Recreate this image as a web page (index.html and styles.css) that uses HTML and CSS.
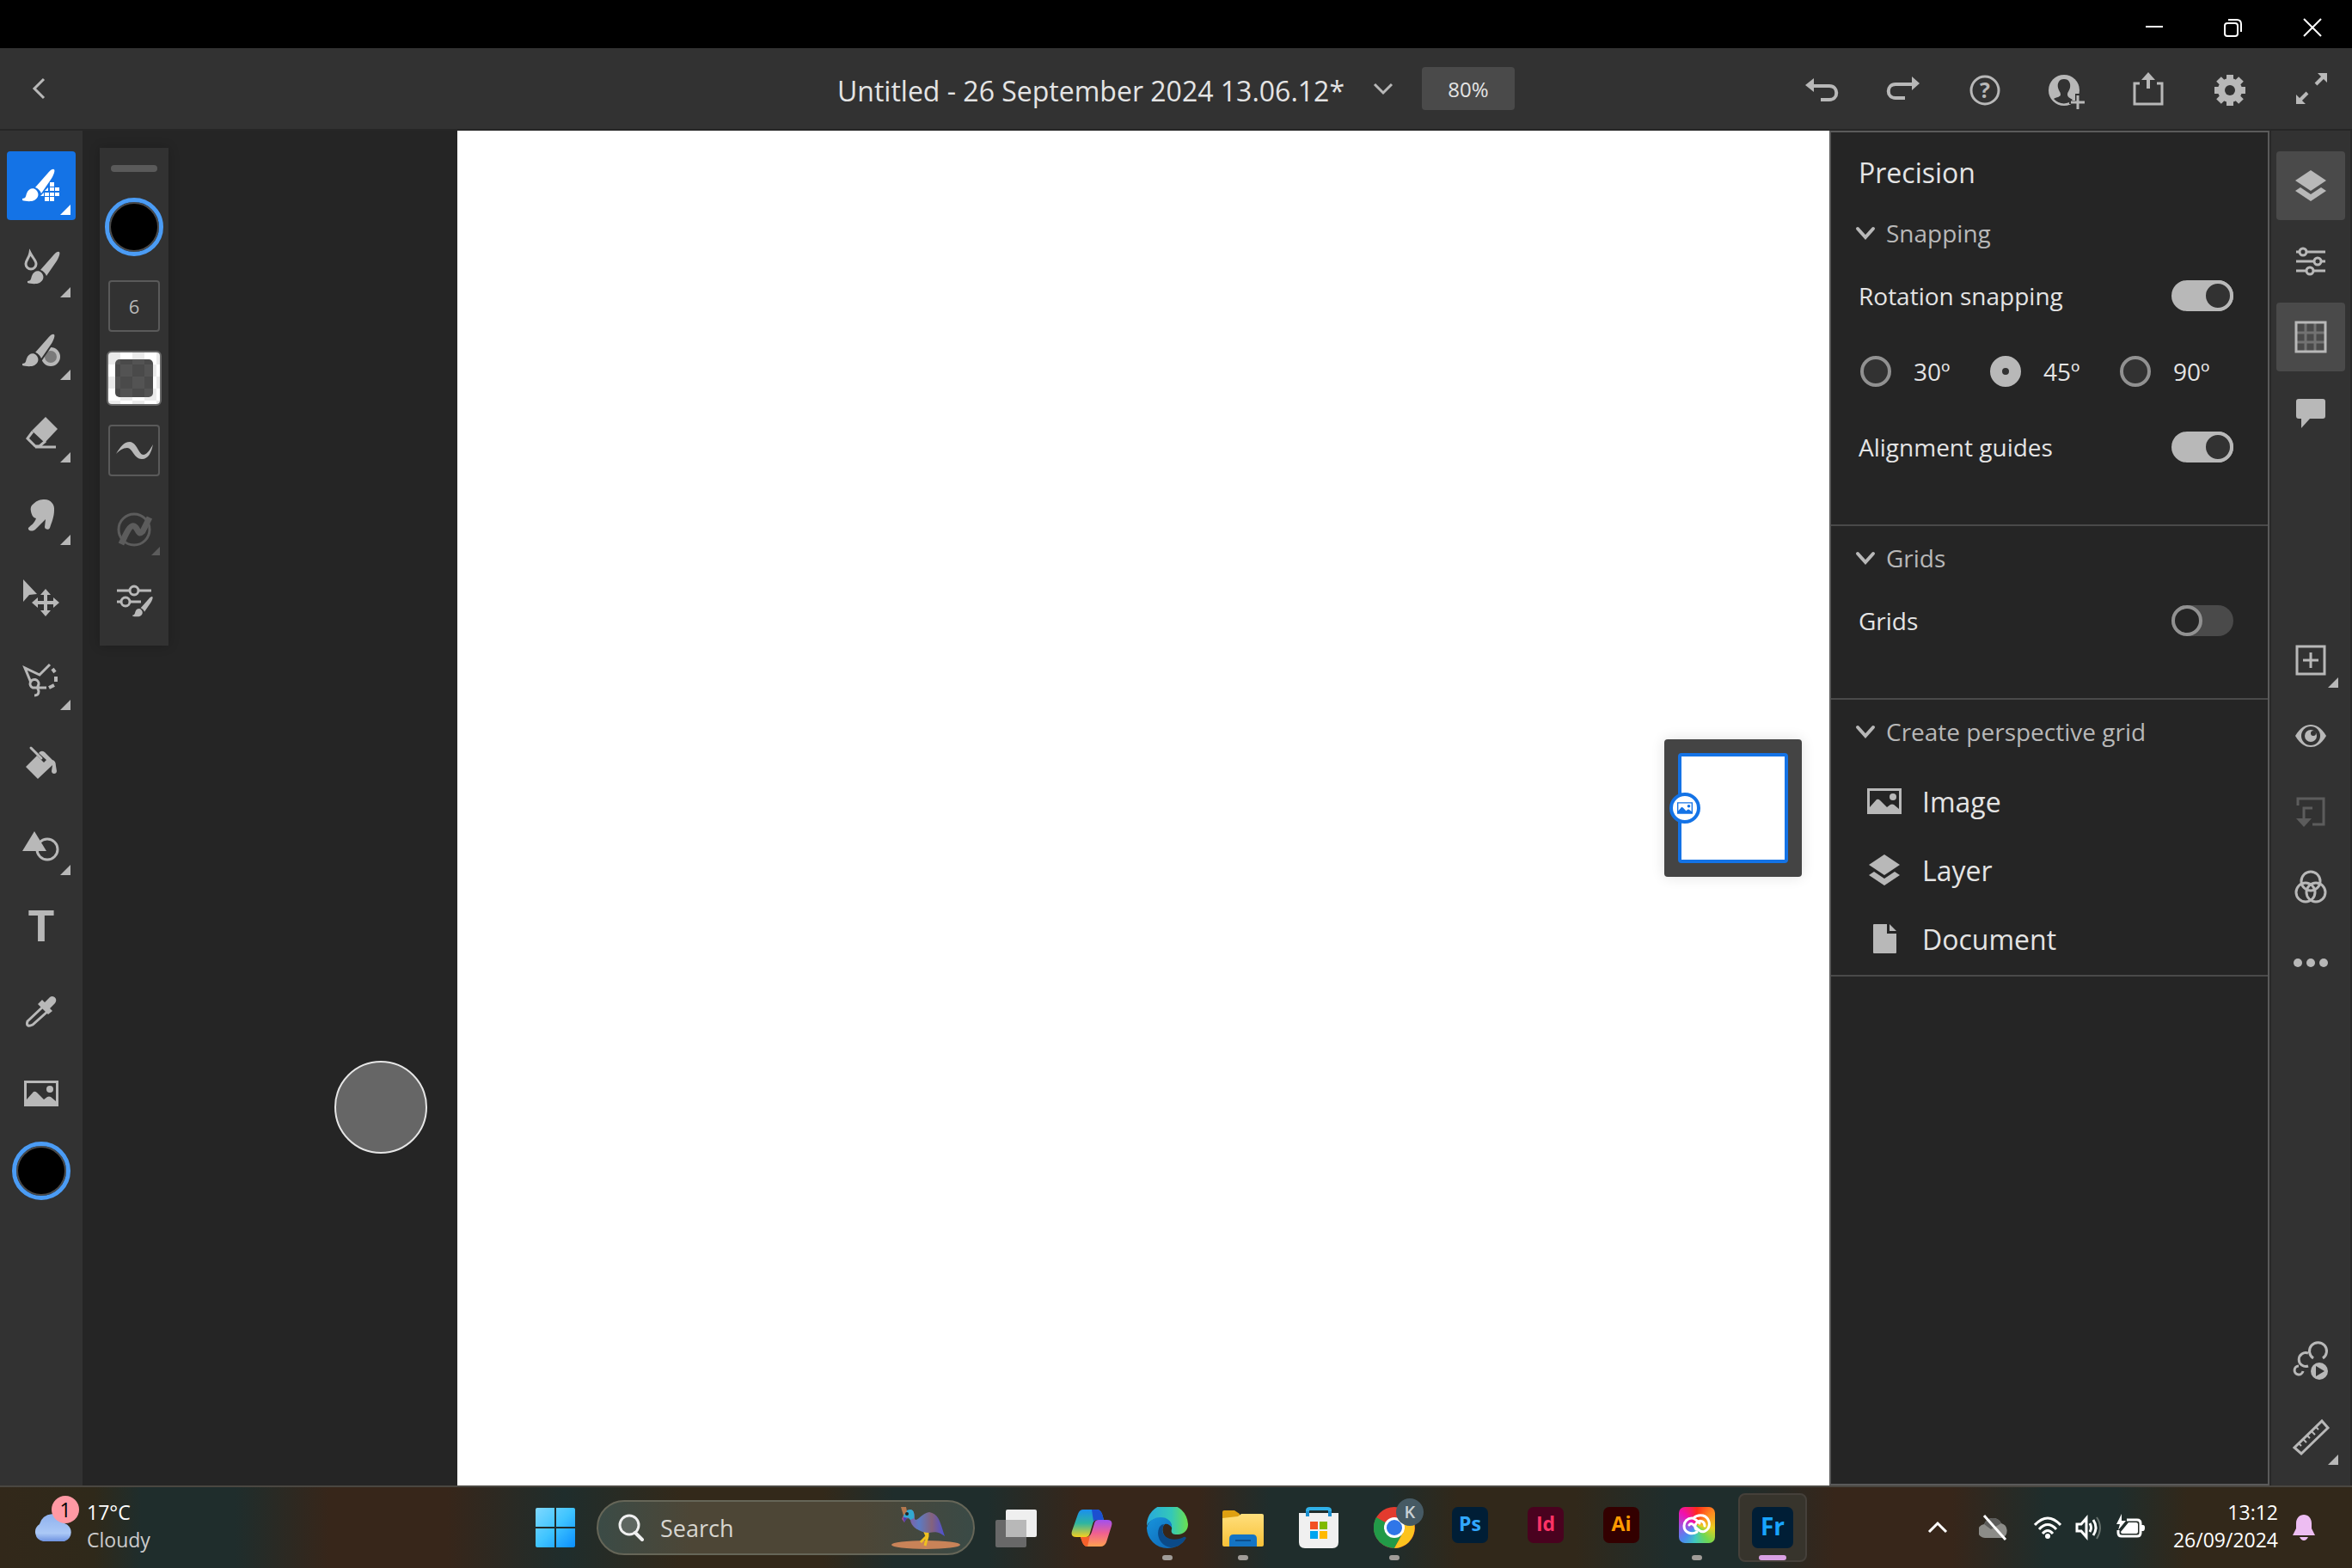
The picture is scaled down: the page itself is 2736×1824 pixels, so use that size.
FILE: index.html
```html
<!DOCTYPE html>
<html lang="en">
  <head>
    <meta charset="UTF-8" />
    <meta name="viewport" content="width=device-width, initial-scale=1.0" />
    <title>Untitled - 26 September 2024 13.06.12*</title>
    <link rel="stylesheet" href="styles.css">
  </head>
  <body>
    <!-- shared icon shapes -->
    <svg class="defs" width="0" height="0" aria-hidden="true">
      <symbol id="brush" viewBox="0 0 80 80">
        <path d="M33 42 L48 25 C52 20 57 19 55 25 C54 28 53 30 51 33 L40 49 C39 46 36 43 33 42z" />
        <path d="M18 55 C22 55 22 52 23 49 C25 43 31 42 34 45 C38 49 37 54 32 57 C28 59 21 58 18 57z" />
      </symbol>
      <symbol id="picture" viewBox="0 0 40 30">
        <path fill-rule="evenodd" d="M0 0H40V30H0z M3 3V22L11 13Q13 12 15 14L23 22L27 19Q29 18 31 19L37 24V3z" />
        <circle cx="30" cy="10" r="4" />
      </symbol>
      <symbol id="layers" viewBox="0 0 36 36">
        <path d="M18 0L36 12L18 24L0 12z" />
        <path d="M6 20L18 28L30 20L36 24L18 36L0 24z" />
      </symbol>
      <symbol id="chevron" viewBox="0 0 24 24">
        <path d="M3 7L12 17L21 7" fill="none" stroke="currentColor" stroke-width="4" stroke-linecap="round" />
      </symbol>
    </svg>

    <div class="titlebar">
      <button aria-label="Minimize"><svg width="24" height="24"><path d="M2 11H22" /></svg></button>
      <button aria-label="Restore"><svg width="24" height="24"><rect x="2" y="7" width="15" height="15" rx="3" /><path d="M6 3H16Q21 3 21 8V17" /></svg></button>
      <button aria-label="Close"><svg width="24" height="24"><path d="M2 2L22 22M22 2L2 22" /></svg></button>
    </div>

    <header class="header">
      <div class="header-left">
        <button aria-label="Back"><svg width="24" height="28"><path class="line" d="M17 3L6 14L17 25" /></svg></button>
      </div>
      <div class="header-title">
        <h1>Untitled - 26 September 2024 13.06.12*</h1>
        <button class="title-menu" aria-label="Document menu"><svg width="24" height="24"><path class="line" d="M2 7L12 17L22 7" /></svg></button>
        <button class="zoom">80%</button>
      </div>
      <div class="header-actions">
        <button aria-label="Undo"><svg width="48" height="48"><path d="M5 20L15 12V28z" /><path class="line thick" d="M13 21H33C44 21 44 37 33 37H23" /></svg></button>
        <button aria-label="Redo"><svg width="48" height="48"><path d="M43 18L34 10V26z" /><path class="line thick" d="M35 19H15C4 19 4 35 15 35H26" /></svg></button>
        <button aria-label="Help"><svg width="48" height="48"><circle class="line" cx="24" cy="26" r="16" /><text x="24" y="35" text-anchor="middle">?</text></svg></button>
        <button aria-label="Invite"><svg width="48" height="48"><circle cx="21" cy="26" r="18" /><path class="hole" d="M21 13C15 13 13 18 14 23C15 27 17 28 17 31C17 34 12 34 9 36C15 43 26 43 31 37C28 35 25 34 25 31C25 28 27 27 28 23C29 18 27 13 21 13z" /><path class="hole" d="M27 38H34V30H48V48H31V42H27z" /><path class="line" d="M37 32V48M29 40H45" /></svg></button>
        <button aria-label="Share"><svg width="48" height="48"><path d="M24 5L32 14H16z" /><path class="line thick" d="M24 12V24" /><path class="line" d="M14 18H8V42H40V18H34" /></svg></button>
        <button aria-label="Settings"><svg width="48" height="48"><path class="line cog" d="M24 8V44M6 26H42M11 13L37 39M37 13L11 39" /><circle cx="24" cy="26" r="14" /><circle class="hole" cx="24" cy="26" r="6" /></svg></button>
        <button aria-label="Full screen"><svg width="48" height="48"><path d="M31 6H42V17zM6 31V42H17z" /><path class="line thick" d="M37 11L29 19M11 37L19 29" /></svg></button>
      </div>
    </header>

    <main class="workspace">
      <nav class="toolbar" aria-label="Tools">
        <button class="active" aria-label="Pixel brush">
          <svg width="80" height="80">
            <use href="#brush" width="80" height="80" />
            <path d="M50 36h5v5h-5zM44 46l4-4v4zM50 42h5v4h-5zM56 42h5v4h-5zM39 52l4-4v4zM44 48h5v4h-5zM50 48h5v4h-5zM56 48h5v4h-5zM44 53h5v5h-5zM50 53h5v5h-5z" />
            <path d="M74 62V74H62z" />
          </svg>
        </button>
        <button aria-label="Live brush">
          <svg width="80" height="80">
            <use href="#brush" x="6" width="80" height="80" />
            <path class="line" d="M27 22C30 28 34 31 34 35A6 6 0 0 1 22 35C22 31 26 28 27 22z" />
            <path d="M74 62V74H62z" />
          </svg>
        </button>
        <button aria-label="Vector brush">
          <svg width="80" height="80">
            <circle cx="51" cy="47" r="11" /><circle class="dim" cx="51" cy="47" r="7" />
            <g class="cutout"><use href="#brush" width="80" height="80" /></g>
            <path d="M74 62V74H62z" />
          </svg>
        </button>
        <button aria-label="Eraser">
          <svg width="80" height="80">
            <path d="M45 21L59 35L44 51L29 37z" />
            <path class="line" d="M30 38L24 46L33 55L38 55L45 49M33 56H57" />
            <path d="M74 62V74H62z" />
          </svg>
        </button>
        <button aria-label="Smudge">
          <svg width="80" height="80">
            <path d="M31 26C35 22 39 21 44 21C51 21 56 27 55 34C55 41 52 48 50 54C49 57 44 56 44 53L45 44L33 56C29 59 24 57 25 54C28 51 32 49 34 43C30 42 29 39 28 35C27 31 28 28 31 26z" />
            <path d="M74 62V74H62z" />
          </svg>
        </button>
        <button aria-label="Move">
          <svg width="80" height="80">
            <path d="M19 18L35 35L26 36L19 44z" />
            <path class="line thick" d="M45 33V57M33 45H57" />
            <path d="M45 29L51 36H39zM45 61L51 54H39zM29 45L36 39V51zM61 45L54 39V51z" />
          </svg>
        </button>
        <button aria-label="Lasso">
          <svg width="80" height="80">
            <path class="line" d="M28 42L21 25L38 33L50 21" />
            <path class="line" d="M46 48L30 48A5 5 0 1 1 37 44C34 50 37 50 37 52Q37 57 32 57" />
            <path class="line thick" d="M49 48L55 45M57 41V35M56 30L53 26" />
            <path d="M74 62V74H62z" />
          </svg>
        </button>
        <button aria-label="Fill">
          <svg width="80" height="80">
            <path d="M22 44L35 31L43 39L46 36L37 28Q40 24 44 27L53 36Q57 37 57 43L58 49C58 53 52 53 52 49L53 42L36 58z" />
            <path class="line" d="M28 22L40 34" stroke-linecap="round" />
          </svg>
        </button>
        <button aria-label="Shapes">
          <svg width="80" height="80">
            <circle class="line" cx="47" cy="44" r="12" />
            <path d="M32 23L46 46H18z" />
            <path d="M74 62V74H62z" />
          </svg>
        </button>
        <button class="type" aria-label="Type">T</button>
        <button aria-label="Eyedropper">
          <svg width="80" height="80">
            <path class="line" d="M42 35L24 52C22 58 26 58 30 56L48 40" />
            <path d="M36 32L41 27L44 30L50 24C54 21 60 26 56 31L50 37L53 40L48 44z" />
          </svg>
        </button>
        <button aria-label="Place image"><svg width="80" height="80"><use href="#picture" x="20" y="25" width="40" height="30" /></svg></button>
        <button class="swatch" aria-label="Color"></button>
      </nav>

      <section class="stage">
        <div class="artboard"></div>

        <div class="brush-panel">
          <span class="handle"></span>
          <button class="swatch" aria-label="Brush color"></button>
          <button class="boxed" aria-label="Brush size 6">6</button>
          <button class="opacity" aria-label="Opacity"><span></span></button>
          <button class="boxed" aria-label="Smoothing"><svg width="56" height="56"><path d="M7 32C12 24 16 18 23 18C32 19 33 33 39 33C44 32 47 26 50 21C48 30 45 38 37 38C28 38 26 25 20 25C15 25 11 28 7 32z" /></svg></button>
          <button class="disabled" aria-label="Pressure" disabled><svg width="60" height="60"><circle class="line" cx="30" cy="30" r="18" /><path class="line fat" d="M15 47C20 36 25 24 30 26S34 38 40 32L48 16" /><path d="M60 50V60H50z" /></svg></button>
          <button class="settings" aria-label="Brush settings">
            <svg width="60" height="60">
              <path class="line" d="M10 18H24M36 18H50M10 31H14M26 31H38" />
              <circle class="line" cx="30" cy="18" r="5" /><circle class="line" cx="20" cy="31" r="5" />
              <use href="#brush" x="17" y="12" width="50" height="50" />
            </svg>
          </button>
        </div>

        <div class="touch-shortcut"></div>

        <div class="layer-thumb">
          <div class="layer-preview"></div>
          <span class="layer-badge"><svg width="18" height="16"><use href="#picture" width="18" height="16" /></svg></span>
        </div>
      </section>

      <aside class="panel">
        <section>
          <h2>Precision</h2>
          <button class="section-head"><svg width="24" height="24"><use href="#chevron" /></svg>Snapping</button>
          <div class="row">
            <label for="rotation">Rotation snapping</label>
            <input class="switch" type="checkbox" role="switch" id="rotation" checked />
          </div>
          <div class="radios">
            <label><input type="radio" name="angle" />30º</label>
            <label><input type="radio" name="angle" checked />45º</label>
            <label><input type="radio" name="angle" />90º</label>
          </div>
          <div class="row">
            <label for="guides">Alignment guides</label>
            <input class="switch" type="checkbox" role="switch" id="guides" checked />
          </div>
        </section>
        <section class="padded">
          <button class="section-head"><svg width="24" height="24"><use href="#chevron" /></svg>Grids</button>
          <div class="row">
            <label for="grids">Grids</label>
            <input class="switch" type="checkbox" role="switch" id="grids" />
          </div>
        </section>
        <section class="padded perspective">
          <button class="section-head"><svg width="24" height="24"><use href="#chevron" /></svg>Create perspective grid</button>
          <button class="item"><svg width="40" height="36"><use href="#picture" y="3" width="40" height="30" /></svg>Image</button>
          <button class="item"><svg width="40" height="36"><use href="#layers" x="2" width="36" height="36" /></svg>Layer</button>
          <button class="item"><svg width="40" height="36"><path d="M7 2Q7 1 8 1H23V12H34V34Q34 35 33 35H8Q7 35 7 34z M26 1L34 9H26z" /></svg>Document</button>
        </section>
      </aside>

      <nav class="rail" aria-label="Panels">
        <button class="on" aria-label="Layers"><svg width="80" height="80"><use href="#layers" x="22" y="22" width="36" height="36" /></svg></button>
        <button aria-label="Layer properties">
          <svg width="80" height="80">
            <path class="line" d="M23 29H26M36 29H57M23 40H43M53 40H57M23 51H34M44 51H57" />
            <circle class="line" cx="31" cy="29" r="4" /><circle class="line" cx="48" cy="40" r="4" /><circle class="line" cx="39" cy="51" r="4" />
          </svg>
        </button>
        <button class="on" aria-label="Precision">
          <svg width="80" height="80">
            <path class="line faint" d="M34 24V56M45 24V56M24 35H56M24 46H56" />
            <rect class="line" x="23" y="23" width="34" height="34" />
          </svg>
        </button>
        <button aria-label="Comments"><svg width="80" height="80"><path d="M26 24H54Q57 24 57 27V44Q57 47 54 47H39L29 58V47H26Q23 47 23 44V27Q23 24 26 24z" /></svg></button>
        <button class="spaced" aria-label="Add layer"><svg width="80" height="80"><rect class="line" x="24" y="24" width="32" height="32" /><path class="line" d="M40 31V49M31 40H49" /><path d="M72 60V72H60z" /></svg></button>
        <button aria-label="Toggle visibility">
          <svg width="80" height="80">
            <path d="M22 40C28 30 34 27 40 27S52 30 58 40C52 50 46 53 40 53S28 50 22 40z" />
            <circle class="hole" cx="40" cy="40" r="11" /><circle cx="40" cy="40" r="7" /><circle class="hole" cx="43" cy="37" r="3" />
          </svg>
        </button>
        <button class="disabled" aria-label="Clip layer" disabled><svg width="80" height="80"><path class="line" d="M25 33V25H55V55H42M42 36H32V48" /><path d="M23 48H41L32 58z" /></svg></button>
        <button aria-label="Blend"><svg width="80" height="80"><circle class="line" cx="40" cy="33" r="11" /><circle class="line" cx="34" cy="46" r="11" /><circle class="line" cx="46" cy="46" r="11" /></svg></button>
        <button aria-label="More"><svg width="80" height="80"><circle cx="25" cy="40" r="5" /><circle cx="40" cy="40" r="5" /><circle cx="55" cy="40" r="5" /></svg></button>
        <button class="bottom" aria-label="Replay">
          <svg width="80" height="80">
            <path class="line" d="M43 36A10 10 0 1 1 54 36M37 30A8 8 0 1 0 37 45M26 45A5 5 0 1 0 31 51" />
            <circle cx="50" cy="51" r="10" /><path class="hole" d="M46 45L56 51L46 57z" />
          </svg>
        </button>
        <button aria-label="Ruler">
          <svg width="80" height="80">
            <path class="line" d="M53 21L60 29L29 59L21 52z" /><path class="line thin" d="M26 47L29 50M31 42L35 46M36 38L39 41M41 33L45 37M46 28L49 31" />
            <path d="M72 60V72H60z" />
          </svg>
        </button>
      </nav>
    </main>

    <footer class="taskbar">
      <button class="weather">
        <span class="cloud">
          <svg width="48" height="34">
            <defs><linearGradient id="cloudFill" x2="0" y2="1"><stop offset="0" stop-color="#8fb2ee" /><stop offset="0.7" stop-color="#abc8f6" /><stop offset="1" stop-color="#6f93e0" /></linearGradient></defs>
            <path d="M12 33A11 11 0 0 1 8 13A15 15 0 0 1 37 12A11 11 0 0 1 37 33z" fill="url(#cloudFill)" />
          </svg>
          <span class="count">1</span>
        </span>
        <span class="weather-text">17°C<small>Cloudy</small></span>
      </button>

      <div class="apps">
        <button aria-label="Start">
          <svg width="46" height="46">
            <defs><linearGradient id="winFill" gradientUnits="userSpaceOnUse" x1="0" y1="0" x2="46" y2="46"><stop offset="0" stop-color="#7fd9ff" /><stop offset="0.5" stop-color="#3fc4ff" /><stop offset="1" stop-color="#0a8fff" /></linearGradient></defs>
            <path fill="url(#winFill)" d="M0 2Q0 0 2 0H22V22H0zM24 0H44Q46 0 46 2V22H24zM0 24H22V46H2Q0 46 0 44zM24 24H46V44Q46 46 44 46H24z" />
          </svg>
        </button>
        <label class="search">
          <svg width="32" height="32"><circle cx="14" cy="13" r="11" fill="#5e6660" stroke="#f0f0f0" stroke-width="3" /><path d="M21 22L29 30" stroke="#f0f0f0" stroke-width="4" stroke-linecap="round" /></svg>
          <input type="text" placeholder="Search" aria-label="Search" />
          <svg width="80" height="52">
            <defs><linearGradient id="birdFill"><stop offset="0" stop-color="#a04a8c" /><stop offset="0.4" stop-color="#5b7bc4" /><stop offset="0.7" stop-color="#85627c" /><stop offset="1" stop-color="#4a50d8" /></linearGradient></defs>
            <ellipse cx="40" cy="46" rx="40" ry="5" fill="#c98358" />
            <path d="M38 29L41 36L34 43M42 28L42 36L39 47" fill="none" stroke="#f0c020" stroke-width="3" />
            <path d="M19 6C26 3 27 10 27 16C30 20 34 10 44 8C56 10 57 22 62 36C54 30 50 31 44 32C34 32 23 26 22 17C20 14 17 15 15 20L12 16C14 12 15 8 19 6z" fill="url(#birdFill)" />
            <path d="M18 6C26 2 27 10 26 15L22 17Q20 13 15 15C13 11 14 8 18 6z" fill="#31a9d2" />
            <path d="M11 2H17L18 7L14 12z" fill="#b5784e" /><path d="M14 14L18 15L15 20z" fill="#4a3cb0" /><circle cx="18" cy="10" r="2" fill="#222" />
          </svg>
        </label>
        <button aria-label="Task view"><svg width="48" height="48"><rect x="0" y="15" width="36" height="32" rx="2" fill="#686868" /><rect x="12" y="3" width="36" height="32" rx="2" fill="#efefef" /><path d="M12 15H36V35H12z" fill="#b8b8b8" /></svg></button>
        <button aria-label="Copilot">
          <svg width="48" height="48">
            <defs>
              <linearGradient id="copA" x2="0" y2="1"><stop offset="0" stop-color="#1a8ff0" /><stop offset="0.5" stop-color="#2fb5a0" /><stop offset="1" stop-color="#f5d020" /></linearGradient>
              <linearGradient id="copB" x2="0" y2="1"><stop offset="0" stop-color="#a050f0" /><stop offset="0.5" stop-color="#f06090" /><stop offset="1" stop-color="#ffa050" /></linearGradient>
            </defs>
            <path d="M14 3H30Q34 3 36 8L38 15H30Q26 15 25 20L22 30Q21 35 17 35H6Q-1 35 1 28L8 8Q10 3 14 3z" fill="url(#copA)" />
            <path d="M24 3H30Q34 3 36 8L38 15H30Q27 15 26 17z" fill="#1c4fd0" />
            <path d="M34 46H19Q15 46 13 41L11 35H18Q22 35 24 29L27 19Q28 15 32 15H42Q49 15 47 22L41 41Q39 46 34 46z" fill="url(#copB)" />
            <path d="M11 35H18Q21 35 22 33L19 46Q15 46 13 41z" fill="#f5602a" />
          </svg>
        </button>
        <button class="running" aria-label="Edge">
          <svg width="48" height="48">
            <defs>
              <linearGradient id="edgeA"><stop offset="0" stop-color="#27a8dd" /><stop offset="0.6" stop-color="#34c8b8" /><stop offset="1" stop-color="#6be04e" /></linearGradient>
              <linearGradient id="edgeB" x2="1" y2="1"><stop offset="0" stop-color="#1794dd" /><stop offset="1" stop-color="#0d5fae" /></linearGradient>
            </defs>
            <path d="M0 22A24 24 0 0 1 48 20C48 29 41 32 35 32C29 32 28 29 29 26C30 19 25 13 16 13C8 13 2 17 0 22z" fill="url(#edgeA)" />
            <path d="M0 24C2 15 10 12 16 12C25 12 30 18 29 24C27 21 24 19 21 20C16 24 18 36 28 38C36 40 40 37 44 35C45 35 46 36 45 37C41 44 33 48 24 48A24 24 0 0 1 0 24z" fill="url(#edgeB)" />
            <path d="M15 23C10 32 15 45 28 47C36 47 42 42 45 37C46 36 45 34 43 35C32 41 18 37 18 26L20 20Q17 20 15 23z" fill="#0b4a88" />
          </svg>
        </button>
        <button class="running" aria-label="File Explorer">
          <svg width="48" height="48">
            <defs><linearGradient id="folderFill" x2="0" y2="1"><stop offset="0" stop-color="#ffdf7c" /><stop offset="1" stop-color="#f8c138" /></linearGradient></defs>
            <path d="M0 6Q0 4 2 4H14L20 8V16H0z" fill="#dfa011" /><path d="M0 13L18 11L22 8H46Q48 8 48 10V44Q48 46 46 46H2Q0 46 0 44z" fill="url(#folderFill)" />
            <path d="M8 46V37Q8 32 13 32H35Q40 32 40 37V46z" fill="#1474c4" /><path d="M15 39H33" stroke="#0c4f8e" stroke-width="2" />
          </svg>
        </button>
        <button aria-label="Microsoft Store">
          <svg width="48" height="48">
            <path d="M11 12V4Q11 2 14 2H34Q37 2 37 4V12" fill="none" stroke="#2fb0e8" stroke-width="4" />
            <path d="M1 7H47V41Q47 48 40 48H8Q1 48 1 41z" fill="#f0f0f0" />
            <path d="M11 5V11M37 5V11" stroke="#1a8fd0" stroke-width="4" />
            <path d="M14 17H23V26H14z" fill="#f25022" /><path d="M25 17H34V26H25z" fill="#7fba00" /><path d="M14 28H23V37H14z" fill="#00a4ef" /><path d="M25 28H34V37H25z" fill="#ffb900" />
          </svg>
        </button>
        <button class="running" aria-label="Chrome">
          <svg width="48" height="48">
            <circle cx="24" cy="24" r="24" fill="#e33b2e" />
            <path d="M24 24L3 12A24 24 0 0 0 24 48L34 30z" fill="#229a48" />
            <path d="M24 13H45A24 24 0 0 1 24 48L34 30z" fill="#fcc31e" />
            <circle cx="24" cy="24" r="12" fill="#fff" /><circle cx="24" cy="24" r="9" fill="#2f76e8" />
          </svg>
          <span class="profile">K</span>
        </button>
        <button aria-label="Photoshop"><span class="tile ps">Ps</span></button>
        <button aria-label="InDesign"><span class="tile id">Id</span></button>
        <button aria-label="Illustrator"><span class="tile ai">Ai</span></button>
        <button class="running" aria-label="Creative Cloud">
          <span class="tile cc"><svg width="34" height="26"><path d="M17 21C11 25 2 22 2 14C2 9 6 5 11 5C15 5 17 8 20 11M8 13Q10 10 13 13L18 18Q25 24 30 17C33 12 31 4 24 2C19 1 15 3 13 5M26 14C26 8 20 7 17 10Q13 14 16 18" fill="none" stroke="#fff" stroke-width="3" stroke-linecap="round" /></svg></span>
        </button>
        <button class="current" aria-label="Fresco"><span class="tile fr">Fr</span></button>
      </div>

      <div class="tray">
        <button aria-label="Hidden icons"><svg width="24" height="24"><path class="stroke" d="M2 17L12 7L22 17" /></svg></button>
        <button class="onedrive" aria-label="OneDrive"><svg width="34" height="32"><path d="M8 28A8 8 0 0 1 6 12A11 11 0 0 1 26 11A9 9 0 0 1 27 28z" fill="#8c8c88" /><path d="M6 12A11 11 0 0 1 26 11L14 18z" fill="#5c5c5a" /><path class="stroke" d="M6 2L31 30" /></svg></button>
        <button class="status" aria-label="Network, volume and battery">
          <svg width="32" height="32"><path class="stroke" d="M1 13Q16 -3 31 13M6 18Q16 7 26 18M10 23Q16 16 22 23" /><circle cx="16" cy="26" r="3" fill="#fff" /></svg>
          <svg width="32" height="32"><path class="stroke" d="M2 12H7L13 5V27L7 20H2zM17 11Q20 16 17 21M21 7Q27 16 21 25" /><path d="M25 4Q33 16 25 29" fill="none" stroke="#66706c" stroke-width="2" /></svg>
          <svg width="34" height="32"><path class="stroke" d="M12 7H24Q28 7 28 11V22Q28 26 24 26H6Q2 26 2 22V19" /><path d="M14 10H23Q25 10 25 12V21Q25 23 23 23H7Q5 23 5 21zM29 13H31Q33 13 33 16Q33 20 31 20H29zM6 0V8H11L2 19L4 12H0z" fill="#fff" /></svg>
        </button>
        <time class="clock"><span>13:12</span><span>26/09/2024</span></time>
        <button aria-label="Notifications"><svg width="28" height="32"><path d="M14 1C19 1 23 5 23 11V17L27 25H1L5 17V11C5 5 9 1 14 1zM9 27H19Q17 31 14 31T9 27z" fill="#edbdf2" /></svg></button>
      </div>
    </footer>
  </body>
</html>
```

FILE: styles.css
```css
:root {
  --bar: #323232;
  --dark: #252525;
  --edge: #5a5a5a;
  --raised: #4a4a4a;
  --icon: #b8b8b8;
  --text: #e4e4e4;
  --blue: #1473e6;
}
*,
*::before,
*::after {
  box-sizing: border-box;
}
body {
  margin: 0;
  min-height: 100vh;
  display: flex;
  flex-direction: column;
  background: var(--dark);
  color: var(--text);
  font-family: "Segoe UI", "Open Sans", sans-serif;
  font-size: 28px;
}
button {
  display: flex;
  align-items: center;
  justify-content: center;
  flex: none;
  padding: 0;
  border: 0;
  background: none;
  color: inherit;
  font: inherit;
}
svg {
  display: block;
  fill: currentColor;
  flex: none;
}
.defs {
  position: absolute;
}
.line {
  fill: none;
  stroke: currentColor;
  stroke-width: 3;
}
.thick {
  stroke-width: 4;
}
.fat {
  stroke-width: 7;
}
.thin {
  stroke-width: 2;
}
.hole {
  fill: var(--bar);
}

/* window title bar */
.titlebar {
  display: flex;
  justify-content: flex-end;
  height: 56px;
  padding-top: 8px;
  background: #000;
}
.titlebar button {
  width: 92px;
}
.titlebar svg {
  fill: none;
  stroke: #fff;
  stroke-width: 2;
}

/* document header */
.header {
  display: grid;
  grid-template-columns: 1fr auto 1fr;
  align-items: center;
  height: 96px;
  background: var(--bar);
  border-bottom: 2px solid #262626;
  color: var(--icon);
}
.header-left {
  padding-left: 34px;
}
.header-title {
  display: flex;
  align-items: center;
}
.header-title h1 {
  margin: 0;
  padding-top: 4px;
  color: var(--text);
  font-size: 32px;
  font-weight: 400;
}
.title-menu {
  width: 90px;
}
.zoom {
  width: 108px;
  height: 50px;
  border-radius: 4px;
  background: var(--raised);
  color: var(--text);
  font-size: 24px;
}
.header-actions {
  display: flex;
  justify-content: flex-end;
}
.header-actions button {
  width: 95px;
  height: 48px;
}
.header-actions text {
  font-size: 25px;
  font-weight: 700;
}
.cog {
  stroke-width: 8;
}

.workspace {
  display: flex;
  flex: 1;
}

/* left tools */
.toolbar {
  display: flex;
  flex-direction: column;
  align-items: center;
  gap: 16px;
  width: 96px;
  padding: 24px 0;
  background: var(--bar);
  color: var(--icon);
}
.toolbar button {
  width: 80px;
  height: 80px;
  border-radius: 4px;
}
.toolbar .active {
  background: var(--blue);
  color: #fff;
}
.toolbar .type {
  font-family: "Liberation Mono", monospace;
  font-size: 54px;
  font-weight: 700;
}
.dim {
  fill: #7a7a7a;
}
.cutout {
  stroke: var(--bar);
  stroke-width: 4;
  paint-order: stroke;
}
.swatch,
.toolbar .swatch {
  width: 68px;
  height: 68px;
  border: 5px solid #4b9cf5;
  border-radius: 50%;
  background: #000;
  box-shadow: inset 0 0 0 2px #4a4a4a;
}

/* canvas */
.stage {
  position: relative;
  display: flex;
  flex: 1;
  padding-left: 436px;
}
.artboard {
  flex: 1;
  background: #fff;
}
.brush-panel {
  position: absolute;
  top: 20px;
  left: 20px;
  display: grid;
  grid-template-rows: 36px 100px 84px 84px 84px 100px 66px;
  place-items: center;
  width: 80px;
  padding: 6px 0 19px;
  background: var(--bar);
  color: var(--icon);
  box-shadow: 0 0 12px rgba(0, 0, 0, 0.2);
}
.handle {
  width: 54px;
  height: 8px;
  border-radius: 4px;
  background: var(--edge);
}
.boxed {
  width: 60px;
  height: 60px;
  border: 2px solid var(--edge);
  border-radius: 4px;
  font-size: 22px;
}
.opacity {
  width: 64px;
  height: 64px;
  border: 2px solid #666;
  border-radius: 6px;
  background: repeating-conic-gradient(#fff 0 25%, #ebebeb 0 50%) 0 0 / 28px 28px;
}
.opacity span {
  width: 44px;
  height: 44px;
  border-radius: 5px;
  background: repeating-conic-gradient(#4a4a4a 0 25%, #535353 0 50%) 6px 6px / 28px 28px;
}
.disabled {
  color: #5c5c5c;
}
.touch-shortcut {
  position: absolute;
  left: 293px;
  bottom: 386px;
  width: 108px;
  height: 108px;
  border: 2px solid #e6e6e6;
  border-radius: 50%;
  background: #666;
}
.layer-thumb {
  position: absolute;
  top: 708px;
  right: 32px;
  padding: 16px;
  border-radius: 4px;
  background: #444;
  box-shadow: 0 0 16px rgba(0, 0, 0, 0.12);
}
.layer-preview {
  width: 128px;
  height: 128px;
  border: 4px solid var(--blue);
  border-radius: 4px;
  background: #fff;
}
.layer-badge {
  position: absolute;
  top: 62px;
  left: 6px;
  display: grid;
  place-items: center;
  width: 36px;
  height: 36px;
  border: 4px solid var(--blue);
  border-radius: 50%;
  background: #fff;
  color: var(--blue);
}

/* precision panel */
.panel {
  width: 512px;
  border: 2px solid var(--edge);
}
.panel section {
  padding: 0 40px 40px 32px;
  border-bottom: 2px solid var(--raised);
}
.panel .padded {
  padding-top: 14px;
}
.panel .perspective {
  padding-bottom: 2px;
}
.panel h2 {
  margin: 0;
  font-size: 32px;
  font-weight: 400;
  line-height: 94px;
}
.section-head {
  gap: 12px;
  height: 46px;
  margin-left: -4px;
  color: var(--icon);
}
.row,
.radios {
  display: flex;
  align-items: center;
  justify-content: space-between;
  height: 100px;
}
.radios {
  justify-content: flex-start;
  height: 76px;
}
.radios label {
  display: flex;
  align-items: center;
  flex: none;
  gap: 26px;
  width: 151px;
}
.radios input {
  appearance: none;
  flex: none;
  width: 36px;
  height: 36px;
  margin: 0 0 0 2px;
  border: 4px solid #919191;
  border-radius: 50%;
  background: var(--bar);
}
.radios input:checked {
  border: 14px solid var(--icon);
}
.switch {
  appearance: none;
  display: flex;
  width: 72px;
  height: 36px;
  margin: 0;
  border-radius: 18px;
  background: var(--raised);
}
.switch::before {
  content: "";
  width: 36px;
  height: 36px;
  border: 4px solid #919191;
  border-radius: 50%;
  background: var(--dark);
}
.switch:checked {
  justify-content: flex-end;
  background: var(--icon);
}
.switch:checked::before {
  border-color: var(--icon);
  background: var(--bar);
}
.item {
  gap: 24px;
  height: 80px;
  margin-left: 10px;
  font-size: 32px;
}
.item svg {
  color: var(--icon);
}
.section-head + .item {
  margin-top: 18px;
}

/* right rail */
.rail {
  display: flex;
  flex-direction: column;
  align-items: center;
  gap: 8px;
  width: 96px;
  padding: 24px 0 16px;
  border: solid #282828;
  border-width: 0 2px;
  background: var(--bar);
  color: var(--icon);
}
.rail button {
  width: 80px;
  height: 80px;
  border-radius: 4px;
}
.rail .on {
  background: var(--raised);
}
.rail .spaced {
  margin-top: 200px;
}
.rail .bottom {
  margin-top: auto;
}
.faint {
  stroke: #727272;
}

/* taskbar */
.taskbar {
  display: grid;
  grid-template-columns: 1fr auto 1fr;
  align-items: center;
  height: 96px;
  border-top: 2px solid #4a4741;
  background: linear-gradient(90deg, #32281a 0, #2f291a 4%, #1f2d2c 6%, #1f2d2c 10%, #37261a 14%, #37261a 19%, #1f2d2c 24%, #33291a 29%, #33291a 35%, #1f2d2c 38%, #1f2d2c 42%, #37261a 46%, #37261a 51%, #1f2d2c 54%, #1f2d2c 59%, #31281a 62%, #31281a 67%, #1f2d2c 71%, #1f2d2c 74%, #37261a 78%, #37261a 83%, #1f2d2c 87%, #1f2d2c 90%, #32281a 93%);
  color: #fff;
  font-size: 23px;
  line-height: 32px;
}
.weather {
  justify-self: start;
  gap: 15px;
  padding-left: 38px;
}
.cloud {
  position: relative;
}
.count,
.profile {
  position: absolute;
  top: -20px;
  right: -6px;
  width: 32px;
  height: 32px;
  border-radius: 50%;
  background: #ff99a4;
  color: #000;
  text-align: center;
}
.weather-text {
  padding-bottom: 5px;
  text-align: left;
}
.weather-text small {
  display: block;
  color: #ccc;
  font-size: 23px;
}
.apps {
  display: flex;
  align-items: center;
  gap: 8px;
  margin-right: 28px;
}
.apps button {
  position: relative;
  width: 80px;
  height: 80px;
  border-radius: 8px;
}
.running::after,
.current::after {
  content: "";
  position: absolute;
  bottom: 2px;
  width: 12px;
  height: 6px;
  border-radius: 3px;
  background: #a09c98;
}
.apps .current {
  border: 2px solid #45403a;
  background: #37342c;
}
.current::after {
  bottom: 0;
  width: 32px;
  background: #d9a0e3;
}
.search {
  display: flex;
  align-items: center;
  width: 440px;
  height: 64px;
  padding: 0 15px 0 22px;
  border: 2px solid #666658;
  border-radius: 32px;
  background: linear-gradient(90deg, #3b4b46, #4d4636 25%, #4d4636 70%, #3a4a46);
}
.search input {
  flex: 1;
  min-width: 0;
  padding: 0 18px;
  border: 0;
  background: none;
  color: #fff;
  font: 27px "Segoe UI", "Open Sans", sans-serif;
}
.search input::placeholder {
  color: #d8d6d0;
}
.profile {
  top: 6px;
  right: 6px;
  background: #465a64;
  color: #c8d0d4;
  font-size: 20px;
  font-weight: 600;
}
.tile {
  display: grid;
  place-items: center;
  width: 42px;
  height: 42px;
  margin-bottom: 6px;
  padding-bottom: 4px;
  border-radius: 7px;
  font-size: 23px;
  font-weight: 700;
}
.ps {
  background: #001e36;
  color: #31a8ff;
}
.id {
  background: #49021f;
  color: #ff3366;
}
.ai {
  background: #330000;
  color: #ff9a00;
}
.cc {
  padding: 0;
  background: conic-gradient(#ff2a1a, #ff8a20 14%, #e8d020 28%, #70d850 40%, #40c8c0 52%, #4a8af0 62%, #a050e0 74%, #f010b0 86%, #ff2a1a);
}
.fr {
  width: 48px;
  height: 48px;
  margin: 0;
  background: #001e36;
  color: #18a4ff;
  font-size: 28px;
}
.tray {
  display: flex;
  align-items: center;
  justify-content: flex-end;
  padding-right: 42px;
}
.stroke {
  fill: none;
  stroke: #fff;
  stroke-width: 3;
}
.onedrive {
  margin: 0 30px 0 36px;
}
.status {
  gap: 16px;
  margin-right: 32px;
}
.clock {
  display: grid;
  margin-right: 16px;
  padding-bottom: 5px;
  text-align: right;
}
```
